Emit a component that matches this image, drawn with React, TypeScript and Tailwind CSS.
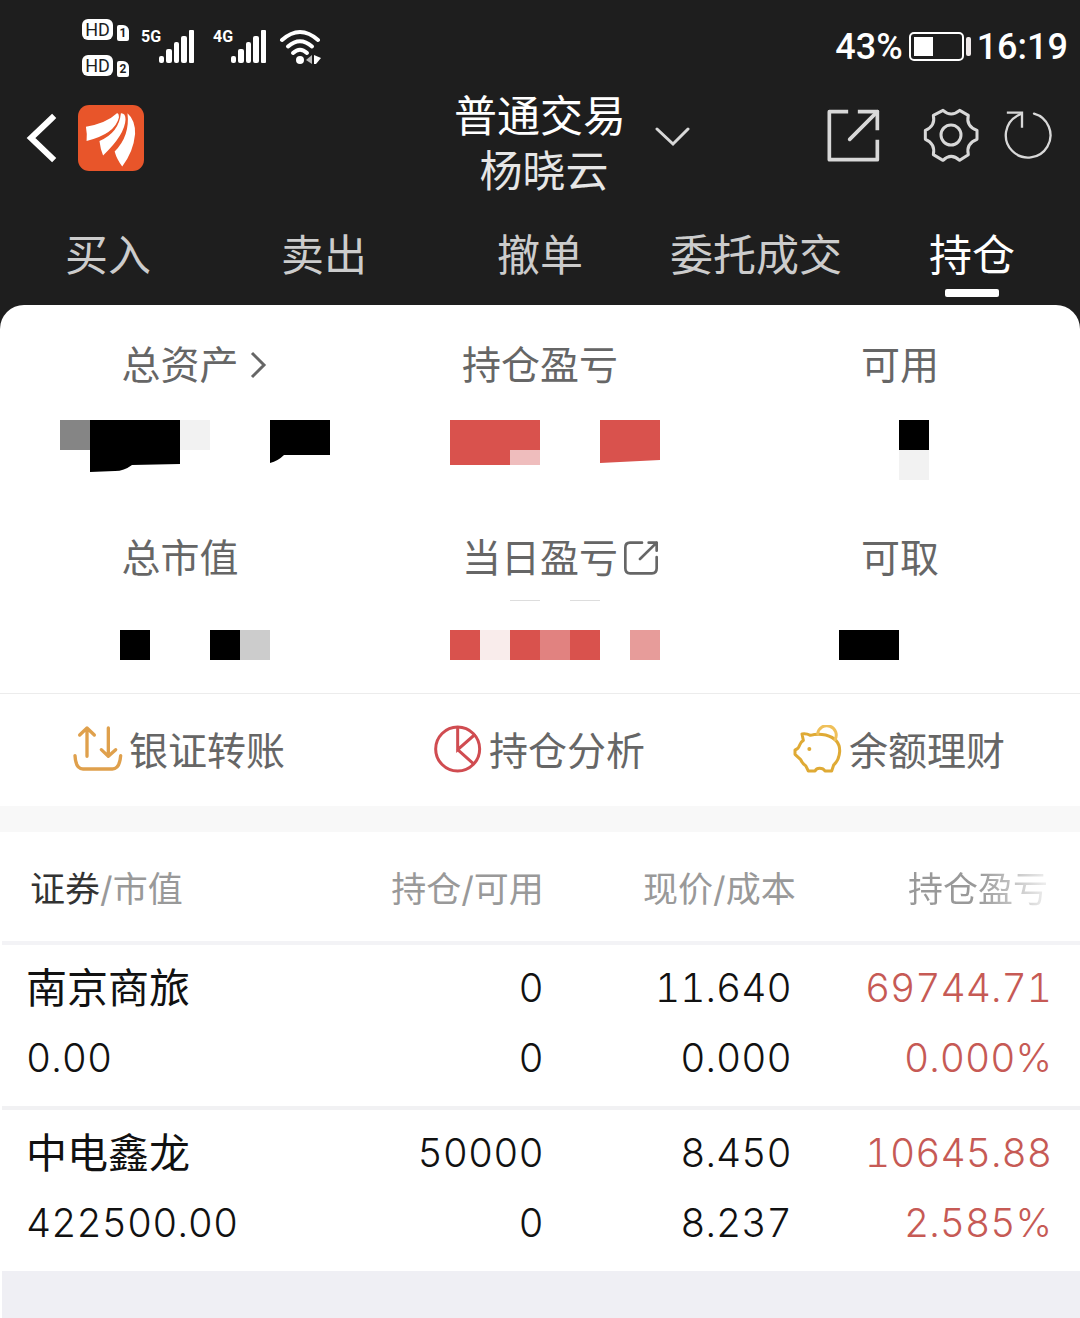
import React from 'react';

type Block = { x: number; y: number; w: number; h: number; fill: string };

const tabs = ['买入', '卖出', '撤单', '委托成交', '持仓'];

const holdings = [
  { name: '南京商旅', value: '0.00', held: '0', usable: '0', price: '11.640', cost: '0.000', profit: '69744.71', rate: '0.000%' },
  { name: '中电鑫龙', value: '422500.00', held: '50000', usable: '0', price: '8.450', cost: '8.237', profit: '10645.88', rate: '2.585%' },
];

const SimBadge = ({ slot }: { slot: string }) => (
  <div className="flex items-end gap-1">
    <span className="flex h-[21px] w-[31px] items-center justify-center rounded-md bg-white text-lg leading-5 text-[#1e1e1e]">HD</span>
    <span className="-mb-px flex h-4 w-3 items-center justify-center rounded-xs rounded-tr-md bg-white text-xs font-bold text-[#1e1e1e]">{slot}</span>
  </div>
);

const Signal = ({ label }: { label: string }) => (
  <div className="flex items-start">
    <span className="w-[18px] text-base leading-5 font-bold">{label}</span>
    <svg viewBox="0 0 36 34" className="mt-0.5 h-[34px] w-9" fill="currentColor" aria-hidden="true">
      <rect x="0" y="27" width="5" height="7" rx="2" />
      <rect x="7" y="20" width="6" height="14" rx="2" />
      <rect x="15" y="13" width="5" height="21" rx="2" />
      <rect x="22" y="7" width="6" height="27" rx="2" />
      <rect x="30" y="1" width="5" height="33" rx="1" />
    </svg>
  </div>
);

const WifiIcon = () => (
  <svg viewBox="0 0 42 36" className="h-9 w-[42px]" fill="none" stroke="currentColor" strokeWidth="4" strokeLinecap="round" aria-hidden="true">
    <path d="M3 11 Q21 -5 39 11" />
    <path d="M9 17.5 Q21 7 33 17.5" />
    <path d="M14 24 Q21 17.5 28 24" />
    <circle cx="21" cy="31" r="4" fill="currentColor" stroke="none" />
    <path d="M33 26 V35 L27 31 Z" fill="#bbb" stroke="none" />
    <path d="M35 26 L42 29 L37 35 H35 Z" fill="currentColor" stroke="none" />
  </svg>
);

const BatteryIcon = () => (
  <svg viewBox="0 0 62 30" className="h-[30px] w-[62px]" aria-hidden="true">
    <rect x="1" y="1" width="53" height="27" rx="4" fill="none" stroke="currentColor" strokeWidth="2" />
    <rect x="5" y="5" width="19" height="19" fill="currentColor" />
    <rect x="57" y="5" width="5" height="19" rx="2" fill="#eee8e8" />
  </svg>
);

const AppLogo = () => (
  <svg viewBox="0 0 200 200" className="size-[66px]" aria-hidden="true">
    <rect width="200" height="200" rx="34" fill="#e8552a" />
    <g fill="#fff">
      <path d="M24 66 Q86 55 118 25 Q124 24 124 38 Q112 88 26 109 Q28 86 24 66 Z" />
      <path d="M65 109 Q124 84 130 25 Q144 24 144 44 Q142 90 76 153 Q68 134 65 109 Z" />
      <path d="M111 141 Q158 94 150 25 Q174 46 173 88 Q168 142 134 186 Q118 166 111 141 Z" />
    </g>
  </svg>
);

const ShareIcon = () => (
  <svg viewBox="0 0 162 162" className="size-[54px]" fill="none" stroke="currentColor" strokeWidth="11" strokeLinecap="square" strokeLinejoin="round" aria-hidden="true">
    <path d="M58 11 H7 V155 H151 V101" />
    <path d="M98 11 H151 V61" />
    <path d="M151 11 L68 94" strokeLinecap="round" />
  </svg>
);

const GearIcon = () => (
  <svg viewBox="0 0 168 168" className="size-14" fill="none" stroke="currentColor" strokeWidth="9" strokeLinejoin="round" aria-hidden="true">
    <path d="M60 10 Q84 32 110 10 L136 25 Q128 57 162 70 V97 Q128 110 136 143 L110 160 Q84 136 60 160 L31 143 Q38 110 7 97 V70 Q38 57 31 25 Z" />
    <circle cx="84" cy="84" r="30" />
  </svg>
);

const RefreshIcon = () => (
  <svg viewBox="0 0 144 144" className="size-12" fill="none" stroke="currentColor" strokeWidth="7" strokeLinecap="round" aria-hidden="true">
    <path d="M90 8 A67 67 0 1 1 40 14 L52 8" />
    <path d="M12 5 H54 V47" strokeLinecap="square" />
  </svg>
);

const PopoutIcon = () => (
  <svg viewBox="0 0 102 102" className="size-[34px]" fill="none" stroke="currentColor" strokeWidth="8" strokeLinecap="round" strokeLinejoin="round" aria-hidden="true">
    <path d="M54 5 H18 Q4 5 4 20 V82 Q4 97 18 97 H84 Q98 97 98 82 V48" />
    <path d="M74 5 H98 V29 M98 5 L48 54" />
  </svg>
);

const TransferIcon = () => (
  <svg viewBox="0 0 150 150" className="size-[50px]" fill="none" stroke="#dfa04c" strokeWidth="10" strokeLinecap="round" strokeLinejoin="round" aria-hidden="true">
    <path d="M42 94 V10 M20 30 L42 9 L64 30" />
    <path d="M106 9 V92 M85 74 L106 94 L128 74" />
    <path d="M6 92 Q8 132 30 132 H118 Q140 132 143 92" />
  </svg>
);

const PieIcon = () => (
  <svg viewBox="0 0 150 150" className="size-[50px]" fill="none" stroke="#d04c51" strokeWidth="9" strokeLinecap="round" aria-hidden="true">
    <circle cx="74" cy="72" r="66" />
    <path d="M74 8 V74 L124 30 M74 74 L121 116" />
  </svg>
);

const PiggyIcon = () => (
  <svg viewBox="0 0 150 150" className="size-[50px]" fill="none" stroke="#dfaa35" strokeWidth="9" strokeLinecap="round" strokeLinejoin="round" aria-hidden="true">
    <path d="M27 27 Q40 25 52 31 Q74 25 98 30 Q142 42 140 80 Q138 106 122 120 L116 138 H96 Q91 130 80 130 Q70 130 66 138 H46 L38 122 Q28 116 23 104 L6 88 V75 Q17 72 20 60 Q24 50 31 46 Z" />
    <path d="M74 26 A28 28 0 1 1 126 44" stroke="#efc05a" />
    <circle cx="49" cy="72" r="6" fill="#dfaa35" stroke="none" />
  </svg>
);

const Masked = ({ blocks, children }: { blocks?: Block[]; children?: React.ReactNode }) => (
  <svg viewBox="0 0 360 105" className="block h-[105px] w-full" aria-hidden="true">
    {blocks?.map((b) => (
      <rect key={b.x + '-' + b.y} x={b.x} y={b.y} width={b.w} height={b.h} fill={b.fill} />
    ))}
    {children}
  </svg>
);

const Stat = ({ label, icon, children }: { label: string; icon?: React.ReactNode; children: React.ReactNode }) => (
  <div>
    <div className="grid h-[60px] grid-cols-[1fr_auto_1fr] items-center text-[#666]">
      <span className="col-start-2 text-[39px] leading-[60px]">{label}</span>
      {icon}
    </div>
    {children}
  </div>
);

const actions = [
  { label: '银证转账', icon: <TransferIcon /> },
  { label: '持仓分析', icon: <PieIcon /> },
  { label: '余额理财', icon: <PiggyIcon /> },
];

const headClass = 'h-[113px] border-b-4 border-[#f3f3f6] pt-1 text-[35px] font-normal whitespace-nowrap text-[#999]';

export default function App() {
  return (
    <div className="flex min-h-screen flex-col bg-[#1e1e1e] font-['Inter','Noto_Sans_CJK_SC',sans-serif]">
      <header className="text-white">
        <div className="flex h-[89px] items-start justify-between pr-3 pl-[82px] font-['Roboto','Noto_Sans_CJK_SC',sans-serif]">
          <div className="flex items-start pt-[19px]">
            <div className="flex flex-col gap-[15px]">
              <SimBadge slot="1" />
              <SimBadge slot="2" />
            </div>
            <div className="ml-3 flex gap-[18px] pt-2">
              <Signal label="5G" />
              <Signal label="4G" />
            </div>
            <div className="ml-3 pt-2.5">
              <WifiIcon />
            </div>
          </div>
          <div className="flex items-center gap-1.5 pt-[27px] text-4xl leading-10 font-medium">
            <span>43%</span>
            <BatteryIcon />
            <span>16:19</span>
          </div>
        </div>

        <div className="grid h-[110px] grid-cols-[1fr_auto_1fr] items-center">
          <div className="flex items-center gap-5 pb-3 pl-[26px]">
            <button type="button" aria-label="返回">
              <svg viewBox="0 0 32 52" className="block h-[52px] w-8" fill="none" stroke="currentColor" strokeWidth="6" strokeLinecap="square" aria-hidden="true">
                <path d="M26 6 L5 26 L26 46" />
              </svg>
            </button>
            <AppLogo />
          </div>
          <h1 className="text-center text-[43px] leading-[55px] font-normal">
            普通交易
            <span className="block pl-2 text-[#e6e6e6]">杨晓云</span>
          </h1>
          <div className="flex items-center pr-7 pb-[18px] text-[#d8d8d8]">
            <button type="button" aria-label="切换账户" className="ml-7 pt-1">
              <svg viewBox="0 0 36 22" className="block h-[22px] w-9" fill="none" stroke="currentColor" strokeWidth="3" strokeLinecap="round" aria-hidden="true">
                <path d="M3 3 L19 18 L34 3" />
              </svg>
            </button>
            <button type="button" aria-label="分享" className="ml-auto">
              <ShareIcon />
            </button>
            <button type="button" aria-label="设置" className="ml-[42px]">
              <GearIcon />
            </button>
            <button type="button" aria-label="刷新" className="ml-[25px]">
              <RefreshIcon />
            </button>
          </div>
        </div>

        <nav className="grid grid-cols-5 pt-[26px] pb-2">
          {tabs.map((tab) => {
            const active = tab === '持仓';
            return (
              <button
                key={tab}
                type="button"
                className={`flex flex-col items-center gap-1 text-[43px] leading-[60px] ${active ? 'text-white' : 'text-[#ccc]'}`}
              >
                {tab}
                <span className={`h-2 w-[54px] rounded-xs ${active ? 'bg-white' : ''}`} />
              </button>
            );
          })}
        </nav>
      </header>

      <main className="flex flex-1 flex-col rounded-t-3xl bg-white">
        <section className="grid grid-cols-3 gap-y-7 pt-[30px]">
          <Stat
            label="总资产"
            icon={
              <svg viewBox="0 0 20 30" className="ml-2.5 h-[30px] w-5" fill="none" stroke="currentColor" strokeWidth="3" aria-hidden="true">
                <path d="M3 3 L15 15 L3 27" />
              </svg>
            }
          >
            <Masked blocks={[{ x: 60, y: 25, w: 30, h: 30, fill: '#858585' }, { x: 180, y: 25, w: 30, h: 30, fill: '#f2f2f2' }]}>
              <path d="M90 25 H180 V69 L132 70 Q124 76 115 76 L90 77 Z M270 25 H330 V60 H284 Q278 66 270 68 Z" />
            </Masked>
          </Stat>
          <Stat label="持仓盈亏">
            <Masked>
              <path d="M90 25 H180 V70 H90 Z M240 25 H300 V65 L240 68 Z" fill="#d9524d" />
              <rect x="150" y="55" width="30" height="15" fill="#efbdbd" />
            </Masked>
          </Stat>
          <Stat label="可用">
            <Masked blocks={[{ x: 179, y: 25, w: 30, h: 30, fill: '#000' }, { x: 179, y: 55, w: 30, h: 30, fill: '#f2f2f2' }]} />
          </Stat>
          <Stat label="总市值">
            <Masked
              blocks={[
                { x: 120, y: 42, w: 30, h: 30, fill: '#000' },
                { x: 210, y: 42, w: 30, h: 30, fill: '#000' },
                { x: 240, y: 42, w: 30, h: 30, fill: '#ccc' },
              ]}
            />
          </Stat>
          <Stat
            label="当日盈亏"
            icon={
              <button type="button" aria-label="当日盈亏详情" className="ml-1.5 justify-self-start">
                <PopoutIcon />
              </button>
            }
          >
            <Masked
              blocks={[
                { x: 150, y: 12, w: 30, h: 1, fill: '#ddd' },
                { x: 210, y: 12, w: 30, h: 1, fill: '#ddd' },
                { x: 90, y: 42, w: 30, h: 30, fill: '#d9524d' },
                { x: 120, y: 42, w: 30, h: 30, fill: '#f9eceb' },
                { x: 150, y: 42, w: 30, h: 30, fill: '#d9524d' },
                { x: 180, y: 42, w: 30, h: 30, fill: '#e18280' },
                { x: 210, y: 42, w: 30, h: 30, fill: '#d9524d' },
                { x: 270, y: 42, w: 30, h: 30, fill: '#e79c9a' },
              ]}
            />
          </Stat>
          <Stat label="可取">
            <Masked blocks={[{ x: 119, y: 42, w: 60, h: 30, fill: '#000' }]} />
          </Stat>
        </section>

        <section className="grid grid-cols-3 border-t border-[#ececec]">
          {actions.map((action) => (
            <button key={action.label} type="button" className="flex h-28 items-center justify-center gap-1.5 pr-0.5 text-[39px] text-[#666]">
              {action.icon}
              <span className="pt-0.5">{action.label}</span>
            </button>
          ))}
        </section>

        <div className="h-[26px] bg-[#f8f8f8]" />

        <div className="flex flex-1 flex-col pl-0.5">
          <table className="w-full table-fixed border-separate border-spacing-0 text-[39px] leading-[70px] text-[#111] tabular-nums">
            <colgroup>
              <col className="w-[27%]" />
              <col className="w-[24%]" />
              <col className="w-[23%]" />
              <col className="w-[26%]" />
            </colgroup>
            <thead>
              <tr>
                <th scope="col" className={`${headClass} pl-7 text-left`}>
                  <span className="text-[#333]">证券</span>/市值
                </th>
                <th scope="col" className={`${headClass} pr-2 text-right`}>持仓/可用</th>
                <th scope="col" className={`${headClass} pr-1 text-right`}>现价/成本</th>
                <th scope="col" className={`${headClass} pr-8 text-right`}>
                  <span className="bg-linear-to-r from-[#999] from-50% to-[#f0f0f0] bg-clip-text text-transparent">持仓盈亏</span>
                </th>
              </tr>
            </thead>
            <tbody className="[&>tr:not(:last-child)>td]:border-b-4 [&>tr>td]:border-[#f1f1f3]">
              {holdings.map((row) => (
                <tr key={row.name} className="text-right font-light">
                  <td className="pt-2 pb-[13px] pl-6 text-left">
                    <div className="text-[41px] font-normal whitespace-nowrap">{row.name}</div>
                    <div>{row.value}</div>
                  </td>
                  <td className="pt-2 pr-2 pb-[13px]">
                    <div>{row.held}</div>
                    <div>{row.usable}</div>
                  </td>
                  <td className="pt-2 pr-2 pb-[13px]">
                    <div>{row.price}</div>
                    <div>{row.cost}</div>
                  </td>
                  <td className="pt-2 pr-7 pb-[13px] text-[#c65a55]">
                    <div>{row.profit}</div>
                    <div>{row.rate}</div>
                  </td>
                </tr>
              ))}
            </tbody>
          </table>
          <div className="min-h-[47px] flex-1 bg-[#efeff4]" />
        </div>
      </main>
    </div>
  );
}
